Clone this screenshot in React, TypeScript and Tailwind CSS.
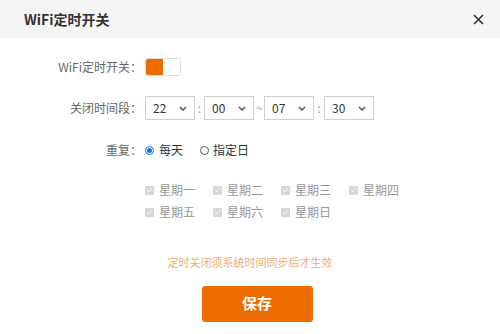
import React from "react";

const font = { fontFamily: '"Noto Sans CJK SC", "Noto Sans", sans-serif' };

function Chevron() {
  return (
    <svg width="8" height="5" viewBox="0 0 8 5" className="text-[#444]">
      <path d="M1 1 L4 4 L7 1" fill="none" stroke="currentColor" strokeWidth="1.3" />
    </svg>
  );
}

function Select({ value }: { value: string }) {
  return (
    <div className="flex h-[24px] w-[50px] items-center justify-between border border-[#d0d0d0] bg-white pl-[7px] pr-[7px] text-[12px] text-[#333]">
      <span>{value}</span>
      <Chevron />
    </div>
  );
}

function Check({ label }: { label: string }) {
  return (
    <div className="flex w-[68px] items-center gap-[5px] text-[12px] text-[#999]">
      <div className="flex h-[9px] w-[9px] items-center justify-center rounded-[1px] bg-[#d8d8d8]">
        <svg width="7" height="6" viewBox="0 0 7 6">
          <path d="M1 3 L3 5 L6 1" fill="none" stroke="#f4f4f4" strokeWidth="1" />
        </svg>
      </div>
      <span>{label}</span>
    </div>
  );
}

export default function App() {
  return (
    <div className="h-[334px] w-[500px] bg-white" style={font}>
      <div className="flex h-[38px] items-center justify-between bg-[#f5f5f5] pl-[24px] pr-[16px]">
        <span className="text-[14px] font-bold text-[#333]">WiFi定时开关</span>
        <svg width="11" height="11" viewBox="0 0 11 11">
          <path d="M1 1 L10 10 M10 1 L1 10" stroke="#333" strokeWidth="1.6" />
        </svg>
      </div>

      <div className="mt-[20px] flex h-[18px] items-center">
        <div className="w-[142px] text-right text-[12px] text-[#666]">WiFi定时开关：</div>
        <div className="ml-[3px] flex h-[18px] w-[36px] overflow-hidden rounded-[3px] border border-[#ddd]">
          <div className="w-[17px] bg-[#ec6c00]" />
          <div className="flex-1 bg-white" />
        </div>
      </div>

      <div className="mt-[20px] flex h-[24px] items-center">
        <div className="w-[142px] text-right text-[12px] text-[#666]">关闭时间段：</div>
        <div className="ml-[3px] flex items-center">
          <Select value="22" />
          <span className="w-[9px] text-center text-[12px] text-[#999]">:</span>
          <Select value="00" />
          <span className="w-[10px] text-center text-[12px] text-[#999]">~</span>
          <Select value="07" />
          <span className="w-[10px] text-center text-[12px] text-[#999]">:</span>
          <Select value="30" />
        </div>
      </div>

      <div className="mt-[19px] flex h-[22px] items-center">
        <div className="w-[142px] text-right text-[12px] text-[#666]">重复：</div>
        <div className="ml-[3px] flex items-center text-[12px] text-[#333]">
          <div className="flex items-center gap-[5px]">
            <div className="flex h-[9px] w-[9px] items-center justify-center rounded-full border border-[#1a73e8]">
              <div className="h-[5px] w-[5px] rounded-full bg-[#1a73e8]" />
            </div>
            <span>每天</span>
          </div>
          <div className="ml-[17px] flex items-center gap-[4px]">
            <div className="h-[9px] w-[9px] rounded-full border border-[#555]" />
            <span>指定日</span>
          </div>
        </div>
      </div>

      <div className="ml-[145px] mt-[19px] flex flex-col gap-[2px]">
        <div className="flex h-[20px] items-center">
          <Check label="星期一" />
          <Check label="星期二" />
          <Check label="星期三" />
          <Check label="星期四" />
        </div>
        <div className="flex h-[20px] items-center">
          <Check label="星期五" />
          <Check label="星期六" />
          <Check label="星期日" />
        </div>
      </div>

      <div className="mt-[32px] text-center text-[11px] text-[#f2ad6e]">定时关闭须系统时间同步后才生效</div>

      <div className="mt-[15px] flex justify-center pl-[14px]">
        <div className="flex h-[36px] w-[111px] items-center justify-center rounded-[3px] bg-[#ec6c00] text-[15px] font-bold text-white">
          保存
        </div>
      </div>
    </div>
  );
}
